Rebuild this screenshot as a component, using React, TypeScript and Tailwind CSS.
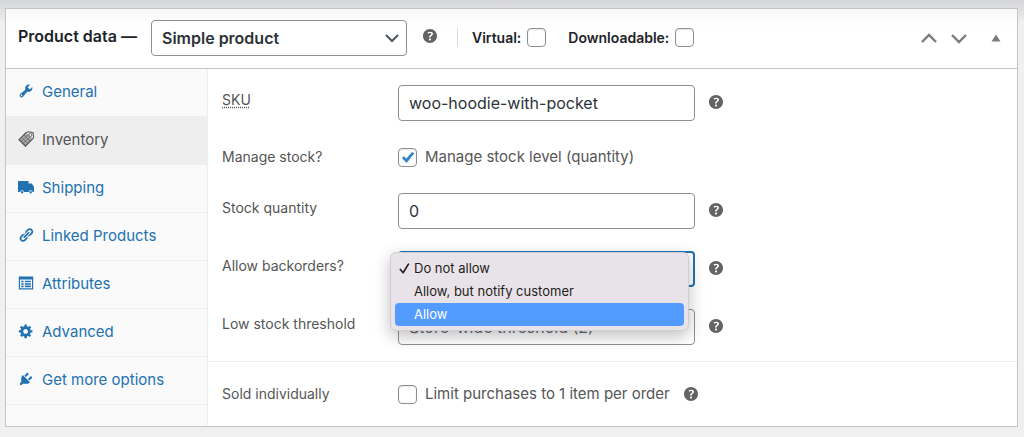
import { ReactNode, useState } from 'react';
import { clsx } from 'clsx';

const BACKORDER_OPTIONS = ['Do not allow', 'Allow, but notify customer', 'Allow'];

const TABS = ['General', 'Inventory', 'Shipping', 'Linked Products', 'Attributes', 'Advanced', 'Get more options'];

const inputCls =
  'h-9 w-full rounded border border-[#8c8f94] bg-white px-2.5 text-base text-[#2c3338] placeholder:text-[#646970] focus:border-[#2271b1] focus:outline-none';

// Dashicons style glyphs, 20x20 grid
const TAB_ICONS: Record<string, ReactNode> = {
  General: (
    <path d="M16.68 9.77c-1.34 1.34-3.3 1.67-4.95.99l-5.41 6.52c-.99.99-2.59.99-3.58 0s-.99-2.59 0-3.57l6.52-5.42c-.68-1.65-.35-3.61.99-4.95 1.28-1.28 3.12-1.62 4.72-1.06l-2.89 2.89 2.82 2.82 2.86-2.87c.53 1.58.18 3.39-1.08 4.65zM3.81 16.21c.4.39 1.04.39 1.43 0 .4-.4.4-1.04 0-1.43-.39-.4-1.03-.4-1.43 0-.39.39-.39 1.03 0 1.43z" />
  ),
  Inventory: (
    <>
      <path d="M10.300 1.800L1.300 10.800l8 8 9-9z" fillOpacity="0.45" />
      <path d="M10.300 1.800L1.300 10.800l8 8 9-9" fill="none" stroke="currentColor" strokeWidth="1.500" />
      <path
        d="M4.300 7.800l8 8M7.300 4.800l8 8M6.300 15.800l9-9M3.800 13.300l9-9"
        fill="none"
        stroke="currentColor"
        strokeWidth="0.8"
      />
      <path d="M10.300 1.800l3-.8 5.600 1.200.6 5.800-1.200 1.800" fill="none" stroke="currentColor" strokeWidth="1.300" />
      <circle cx="15.500" cy="5" r="1.900" fill="#eeeeee" stroke="currentColor" />
    </>
  ),
  Shipping: (
    <path d="M0 2.500h13.200v3.200h4.100l2.700 4.400v6.300h-1.800a2.300 2.300 0 0 0-4.600 0H7.400a2.300 2.300 0 0 0-4.600 0H0zM5.100 15.100a1.500 1.500 0 1 1 0 3 1.500 1.500 0 0 1 0-3zm10.800 0a1.500 1.500 0 1 1 0 3 1.500 1.500 0 0 1 0-3z" />
  ),
  'Linked Products': (
    <path d="M17.74 2.76c1.68 1.69 1.68 4.41 0 6.1l-1.53 1.52c-1.12 1.12-2.7 1.47-4.14 1.09l2.62-2.61.76-.77.76-.76c.84-.84.84-2.2 0-3.04-.84-.85-2.2-.85-3.04 0l-.77.76-3.38 3.38c-.37-1.44-.02-3.02 1.1-4.14l1.52-1.53c1.69-1.68 4.42-1.68 6.1 0zM8.59 13.43l5.34-5.34c.42-.42.42-1.1 0-1.52-.44-.43-1.13-.39-1.53 0l-5.33 5.34c-.42.42-.42 1.1 0 1.52.44.43 1.13.39 1.52 0zm-.76 2.29l4.14-4.15c.38 1.44.03 3.02-1.09 4.14l-1.52 1.53c-1.69 1.68-4.41 1.68-6.1 0-1.68-1.68-1.68-4.42 0-6.1l1.53-1.52c1.12-1.12 2.7-1.47 4.14-1.1l-4.14 4.15c-.85.84-.85 2.2 0 3.05.84.84 2.2.84 3.04 0z" />
  ),
  Attributes: (
    <path
      fillRule="evenodd"
      d="M1 2h18v16H1zM2.500 5.500v11h15v-11zM4 7.200h3v2H4zm4.500 0H16v2H8.500zM4 10.200h3v2H4zm4.500 0H16v2H8.500zM4 13.200h3v2H4zm4.500 0H16v2H8.500z"
    />
  ),
  Advanced: (
    <path d="M18 12h-2.180c-.17.7-.44 1.350-.81 1.930l1.540 1.540-2.100 2.100-1.540-1.540c-.58.36-1.230.63-1.910.79V19H8v-2.180c-.68-.16-1.330-.43-1.910-.79l-1.540 1.540-2.120-2.120 1.540-1.540c-.36-.58-.63-1.230-.79-1.910H1V9.030h2.170c.16-.7.44-1.350.8-1.940L2.430 5.550l2.100-2.100 1.540 1.540c.58-.37 1.240-.64 1.930-.81V2h3v2.180c.68.16 1.330.43 1.910.79l1.540-1.540 2.120 2.120-1.540 1.540c.36.59.64 1.240.8 1.940H18V12zm-8.500 1.500c1.660 0 3-1.340 3-3s-1.340-3-3-3-3 1.340-3 3 1.340 3 3 3z" />
  ),
  'Get more options': (
    <path d="M13.110 4.360L9.870 7.600 8 5.730l3.240-3.240c.35-.34 1.050-.2 1.560.32.52.51.66 1.210.31 1.550zm-8 1.770l.91-1.120 9.010 9.010-1.190.84c-.71.71-2.630 1.160-3.820 1.160H6.140L4.900 17.260c-.59.59-1.540.59-2.120 0-.59-.58-.59-1.530 0-2.120l1.240-1.240v-3.880c0-1.130.4-3.190 1.090-3.890zm7.260 3.970l3.240-3.240c.34-.35 1.040-.21 1.550.31.52.51.66 1.210.31 1.550l-3.240 3.250z" />
  ),
};

function HelpTip({ className }: { className?: string }) {
  return (
    <button type="button" aria-label="Help" className={clsx('shrink-0 text-[#646464]', className)}>
      <svg viewBox="3 3 14 14" className="size-3.5" fill="currentColor">
        <path d="M17 10c0-3.870-3.140-7-7-7-3.870 0-7 3.130-7 7s3.130 7 7 7c3.860 0 7-3.130 7-7zm-6.300 1.480H9.140v-.43c0-.38.08-.7.24-.98s.46-.57.88-.89c.41-.29.68-.53.81-.71.14-.18.2-.39.2-.62 0-.25-.09-.44-.28-.58-.19-.13-.45-.19-.79-.19-.58 0-1.250.19-2 .57l-.64-1.280c.87-.49 1.800-.74 2.770-.74.81 0 1.450.2 1.920.58.48.39.71.91.71 1.550 0 .43-.09.8-.29 1.110-.19.32-.57.67-1.110 1.060-.38.28-.61.49-.71.63-.1.15-.15.34-.15.57v.35zm-1.470 2.740c-.18-.17-.27-.42-.27-.73 0-.33.08-.58.26-.75s.43-.25.77-.25c.32 0 .57.09.75.26s.27.42.27.74c0 .3-.09.55-.27.72-.18.18-.43.27-.75.27-.33 0-.58-.09-.76-.26z" />
      </svg>
    </button>
  );
}

function Checkbox({ id, defaultChecked }: { id: string; defaultChecked?: boolean }) {
  return (
    <span className="grid shrink-0">
      <input
        id={id}
        type="checkbox"
        defaultChecked={defaultChecked}
        className="peer col-start-1 row-start-1 size-[19px] appearance-none rounded border border-[#8c8f94] bg-white shadow-[inset_0_1px_2px_rgba(0,0,0,0.1)]"
      />
      <svg
        viewBox="0 0 20 20"
        className="pointer-events-none invisible col-start-1 row-start-1 size-[19px] text-[#3582c4] peer-checked:visible"
        fill="currentColor"
      >
        <path d="M14.830 4.090l2.400 1.560L9.100 15.900 4.100 10.600l2-2 2.700 2.500z" />
      </svg>
    </span>
  );
}

function FieldRow({ id, label, children }: { id: string; label: ReactNode; children: ReactNode }) {
  return (
    <div className="flex items-start">
      <label htmlFor={id} className="w-44 shrink-0 text-sm leading-[30px]">
        {label}
      </label>
      <div className="w-full max-w-[297px]">{children}</div>
      <HelpTip className="mt-2.5 ml-3.5" />
    </div>
  );
}

function BackordersField() {
  const [value, setValue] = useState('Do not allow');
  const [active, setActive] = useState('Allow');
  const [open, setOpen] = useState(true);

  return (
    <div className="relative">
      <select
        id="backorders"
        value={value}
        onChange={(e) => setValue(e.target.value)}
        className="h-9 w-full appearance-none rounded border-2 border-[#2271b1] bg-white px-2.5 text-base text-[#2c3338] focus:outline-none"
      >
        {BACKORDER_OPTIONS.map((option) => (
          <option key={option}>{option}</option>
        ))}
      </select>
      {open && (
        <ul
          role="listbox"
          aria-label="Allow backorders?"
          className="absolute top-px -left-2 z-10 w-[299px] rounded-md border border-[#d0ccd2] bg-[#e8e3e9] p-1 shadow-[0_5px_16px_rgba(0,0,0,0.25)]"
        >
          {BACKORDER_OPTIONS.map((option) => (
            <li key={option} role="option" aria-selected={option === value}>
              <button
                type="button"
                onMouseEnter={() => setActive(option)}
                onClick={() => {
                  setValue(option);
                  setOpen(false);
                }}
                className={clsx(
                  'flex h-[23px] w-full items-center rounded pl-1 text-left text-[13px]',
                  option === active ? 'bg-[#529bff] text-white' : 'text-[#1f1d20]'
                )}
              >
                <span className="w-[15px] shrink-0">
                  {option === value && (
                    <svg viewBox="0 0 12 12" className="size-[11px]" fill="none" stroke="currentColor" strokeWidth="1.8">
                      <path d="M1.500 7l3 3.600L10.300 1.200" strokeLinecap="round" strokeLinejoin="round" />
                    </svg>
                  )}
                </span>
                {option}
              </button>
            </li>
          ))}
        </ul>
      )}
    </div>
  );
}

function PanelHeader() {
  return (
    <header className="flex h-[60px] items-center border-b border-[#c3c4c7] bg-linear-to-b from-[#f8f8f8] to-white to-30% pr-4 pb-0.5 pl-3 text-[#1d2327]">
      <label htmlFor="product-type" className="shrink-0 pb-1 text-base font-semibold">
        Product data —
      </label>
      <div className="ml-3.5 grid w-64 items-center">
        <select
          id="product-type"
          className="col-start-1 row-start-1 h-9 w-full appearance-none rounded border border-[#8c8f94] bg-white px-2.5 text-base font-semibold text-[#2c3338]"
        >
          <option>Simple product</option>
        </select>
        <svg
          viewBox="0 0 14 14"
          className="pointer-events-none col-start-1 row-start-1 mr-2 size-3.5 justify-self-end text-[#50575e]"
          fill="none"
          stroke="currentColor"
          strokeWidth="2"
        >
          <path d="M1 4l6 6 6-6" />
        </svg>
      </div>
      <HelpTip className="mb-1 ml-4" />
      <div className="ml-5 flex items-center gap-[22px] border-l border-[#dcdcde] pl-3.5 text-sm leading-4 font-semibold">
        <div className="flex items-center gap-1.5">
          <label htmlFor="virtual">Virtual:</label>
          <Checkbox id="virtual" />
        </div>
        <div className="flex items-center gap-1.5">
          <label htmlFor="downloadable">Downloadable:</label>
          <Checkbox id="downloadable" />
        </div>
      </div>
      <div className="ml-auto flex items-center text-[#787c82]">
        <button type="button" aria-label="Move up">
          <svg viewBox="0 0 16 16" className="size-4" fill="none" stroke="currentColor" strokeWidth="2.400">
            <path d="M1 12l7-7 7 7" />
          </svg>
        </button>
        <button type="button" aria-label="Move down" className="ml-3.5">
          <svg viewBox="0 0 16 16" className="size-4" fill="none" stroke="currentColor" strokeWidth="2.400">
            <path d="M1 5l7 7 7-7" />
          </svg>
        </button>
        <button type="button" aria-label="Toggle panel" className="ml-6">
          <svg viewBox="0 0 10 8" className="h-2 w-2.5" fill="currentColor">
            <path d="M5 0.500l4.500 7h-9z" />
          </svg>
        </button>
      </div>
    </header>
  );
}

function TabList() {
  return (
    <nav className="w-[202px] shrink-0 border-r border-[#eeeeee] bg-[#fafafa]">
      <ul>
        {TABS.map((tab) => (
          <li key={tab}>
            <a
              href={`#${tab.toLowerCase().replace(/ /g, '-')}`}
              className={clsx(
                'flex h-12 items-center border-b border-[#eeeeee] pl-3 text-[15px]',
                tab === 'Inventory' ? 'bg-[#eeeeee] text-[#555555]' : 'text-[#2271b1]'
              )}
            >
              <svg viewBox="0 0 20 20" className="mr-2 mb-1 size-4 shrink-0" fill="currentColor">
                {TAB_ICONS[tab]}
              </svg>
              {tab}
            </a>
          </li>
        ))}
      </ul>
    </nav>
  );
}

export default function App() {
  return (
    <div className="min-h-screen bg-[#f0f0f1] bg-linear-to-b from-[#d4d5d8] to-[#f0f0f1] to-[24px] pt-2 pr-1.5 pb-2.5 pl-[5px] font-['Inter',sans-serif] text-[#555555]">
      <section className="border border-[#c3c4c7] bg-white">
        <PanelHeader />
        <div className="flex">
          <TabList />
          <main className="min-w-0 flex-1">
            <div className="flex flex-col gap-[22px] border-b border-[#eeeeee] px-3.5 py-4">
              <FieldRow id="sku" label={<abbr title="Stock Keeping Unit" className="underline decoration-dotted underline-offset-2">SKU</abbr>}>
                <input id="sku" type="text" defaultValue="woo-hoodie-with-pocket" className={inputCls} />
              </FieldRow>

              <div className="flex h-7 items-center">
                <span className="w-44 shrink-0 text-sm">Manage stock?</span>
                <Checkbox id="manage-stock" defaultChecked />
                <label htmlFor="manage-stock" className="ml-2 text-[15px]">
                  Manage stock level (quantity)
                </label>
              </div>

              <FieldRow id="stock" label="Stock quantity">
                <input id="stock" type="text" inputMode="numeric" defaultValue="0" className={inputCls} />
              </FieldRow>

              <FieldRow id="backorders" label="Allow backorders?">
                <BackordersField />
              </FieldRow>

              <FieldRow id="low-stock" label="Low stock threshold">
                <input id="low-stock" type="text" placeholder="Store-wide threshold (2)" className={inputCls} />
              </FieldRow>
            </div>

            <div className="flex h-16 items-center px-3.5">
              <span className="w-44 shrink-0 text-sm">Sold individually</span>
              <Checkbox id="sold-individually" />
              <label htmlFor="sold-individually" className="ml-2 text-[15px]">
                Limit purchases to 1 item per order
              </label>
              <HelpTip className="ml-3.5" />
            </div>
          </main>
        </div>
      </section>
    </div>
  );
}
